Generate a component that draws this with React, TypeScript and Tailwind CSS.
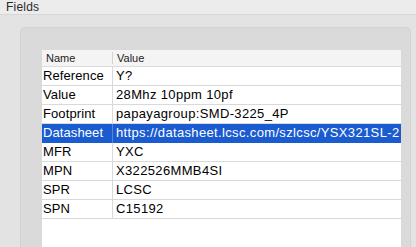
import React from "react";

const rows: [string, string, boolean?][] = [
  ["Reference", "Y?"],
  ["Value", "28Mhz 10ppm 10pf"],
  ["Footprint", "papayagroup:SMD-3225_4P"],
  ["Datasheet", "https://datasheet.lcsc.com/szlcsc/YSX321SL-2", true],
  ["MFR", "YXC"],
  ["MPN", "X322526MMB4SI"],
  ["SPR", "LCSC"],
  ["SPN", "C15192"],
];

export default function App() {
  return (
    <div
      className="w-[416px] h-[247px] overflow-hidden bg-[#e3e3e3] flex flex-col"
      style={{ fontFamily: '"Liberation Sans", Arial, sans-serif' }}
    >
      <div className="h-[15px] shrink-0 bg-[#ececec] border-b border-[#d6d6d6] pl-[6px] pt-[1px] text-[12px] leading-[13px] tracking-[0.2px] text-[#2a2a2a]">
        Fields
      </div>
      <div className="flex-1 pl-[20px] pr-[5px] pt-[12px]">
        <div className="h-[260px] w-[391px] rounded-t-[5px] border border-[#d2d2d2] bg-[#dadada] pl-[21px] pr-[9px] pt-[22px]">
          <div className="h-full bg-white">
            <div className="flex h-[17px] bg-[#f4f4f4] border-b border-[#dcdcdc] text-[11px] text-[#222]">
              <div className="w-[70px] pl-[4px] leading-[17px] flex items-center">Name</div>
              <div className="my-[2px] w-px bg-[#d4d4d4]" />
              <div className="pl-[4px] leading-[17px]">Value</div>
            </div>
            {rows.map(([n, v, sel]) => (
              <div
                key={n}
                className={
                  sel
                    ? "flex h-[19px] bg-[#1a5bd0] text-white text-[13px] leading-[18px]"
                    : "flex h-[19px] border-b border-[#d9d9d9] text-black text-[13px] leading-[18px]"
                }
              >
                <div className="w-[70px] pl-[1px] whitespace-nowrap overflow-hidden tracking-[0.1px]">{n}</div>
                <div className={sel ? "w-px bg-[#5a86d8]" : "w-px bg-[#d9d9d9]"} />
                <div className="pl-[3px] whitespace-nowrap overflow-hidden flex-1 tracking-[0.35px]">{v}</div>
              </div>
            ))}
          </div>
        </div>
      </div>
    </div>
  );
}
